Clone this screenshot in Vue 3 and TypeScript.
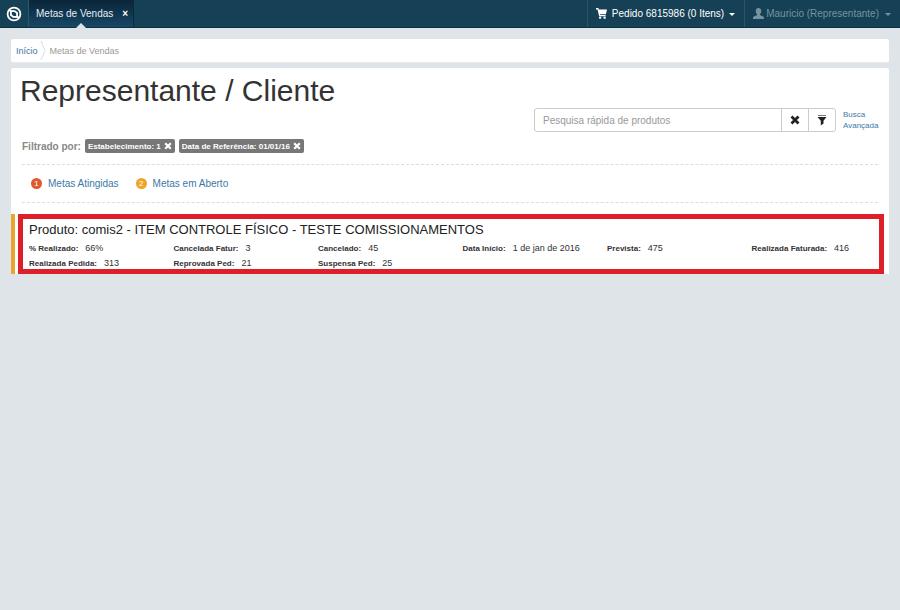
<script setup lang="ts">
import { ref } from 'vue'

interface Field {
  label: string
  value: string
}

const search = ref('')
const filters = ref<string[]>(['Estabelecimento: 1', 'Data de Referência: 01/01/16'])
const legend = [
  { count: 1, label: 'Metas Atingidas', tone: 'reached' },
  { count: 2, label: 'Metas em Aberto', tone: 'open' },
]
const fields: Field[] = [
  { label: '% Realizado:', value: '66%' },
  { label: 'Cancelada Fatur:', value: '3' },
  { label: 'Cancelado:', value: '45' },
  { label: 'Data Início:', value: '1 de jan de 2016' },
  { label: 'Prevista:', value: '475' },
  { label: 'Realizada Faturada:', value: '416' },
  { label: 'Realizada Pedida:', value: '313' },
  { label: 'Reprovada Ped:', value: '21' },
  { label: 'Suspensa Ped:', value: '25' },
]

function removeFilter(name: string): void {
  filters.value = filters.value.filter((f) => f !== name)
}
</script>

<template>
  <header class="navbar">
    <a class="brand" href="#" aria-label="Página inicial">
      <svg viewBox="0 0 16 16" width="16" height="16">
        <circle cx="8" cy="8" r="6.400" fill="none" stroke="#fff" stroke-width="1.800" />
        <path d="M2 4 9 4.200 12 6.500V10L14 12 7 11.800 4 9.500V6z" fill="#fff" />
        <path d="M5.800 6H8.500L10.200 7.500V10H7.500L5.800 8.500z" fill="#154055" />
      </svg>
    </a>
    <div class="tab">
      <a href="#">Metas de Vendas</a>
      <button type="button" aria-label="Fechar aba">×</button>
    </div>
    <nav class="menu">
      <a class="order" href="#">
        <svg viewBox="0 0 16 16" width="11" height="11">
          <path d="M0 0h3.500l.6 2H16l-1.600 7H5.800l.3 1.300H14V12H4.600L2.200 2H0z" fill="currentColor" />
          <circle cx="6" cy="14" r="1.700" fill="currentColor" />
          <circle cx="12.500" cy="14" r="1.700" fill="currentColor" />
        </svg>
        <span>Pedido 6815986 (0 Itens)</span>
        <i class="caret"></i>
      </a>
      <a class="user" href="#">
        <svg viewBox="0 0 16 16" width="11" height="11">
          <path d="M8 0c2.600 0 4 1.900 4 4.300 0 2-.9 3.800-2 4.700v1.200l4.800 2.300c.8.400 1.200 1 1.200 2V16H0v-1.500c0-1 .4-1.600 1.200-2L6 10.200V9C4.900 8.100 4 6.300 4 4.300 4 1.900 5.400 0 8 0z" fill="currentColor" />
        </svg>
        <span>Mauricio (Representante)</span>
        <i class="caret"></i>
      </a>
    </nav>
  </header>

  <main class="page">
    <nav class="breadcrumb" aria-label="Trilha">
      <a href="#">Início</a>
      <svg viewBox="0 0 6 23" width="6" height="23">
        <path d="M1 2 5 11.500 1 21" fill="none" stroke="#d8dde1" />
      </svg>
      <span>Metas de Vendas</span>
    </nav>

    <section class="panel">
      <h1>Representante / Cliente</h1>

      <form class="search" @submit.prevent>
        <div class="group">
          <input v-model="search" type="text" aria-label="Pesquisa rápida" placeholder="Pesquisa rápida de produtos" />
          <button type="button" aria-label="Limpar" @click="search = ''">
            <svg viewBox="0 0 10 10" width="10" height="10">
              <path d="M1.500 1.500 8.500 8.500M8.500 1.500 1.500 8.500" stroke="currentColor" stroke-width="2.800" />
            </svg>
          </button>
          <button type="submit" aria-label="Filtrar">
            <svg viewBox="0 0 10 11" width="10" height="11">
              <path d="M1 .5h8" stroke="#777" />
              <path d="M.5 2h9L6.500 5.800V8.500L3.800 10.500V5.800z" fill="currentColor" />
            </svg>
          </button>
        </div>
        <a href="#">Busca Avançada</a>
      </form>

      <div class="filters">
        <span class="filters-title">Filtrado por:</span>
        <span v-for="f in filters" :key="f" class="chip">
          {{ f }}
          <button type="button" :aria-label="'Remover ' + f" @click="removeFilter(f)">
            <svg viewBox="0 0 10 10" width="8" height="8">
              <path d="M1.500 1.500 8.500 8.500M8.500 1.500 1.500 8.500" stroke="currentColor" stroke-width="2.800" />
            </svg>
          </button>
        </span>
      </div>

      <div class="legend">
        <a v-for="l in legend" :key="l.label" href="#">
          <span class="dot" :class="l.tone">{{ l.count }}</span>
          <span>{{ l.label }}</span>
        </a>
      </div>

      <article class="goal">
        <div class="goal-box">
          <h2>Produto: comis2 - ITEM CONTROLE FÍSICO - TESTE COMISSIONAMENTOS</h2>
          <dl>
            <div v-for="f in fields" :key="f.label">
              <dt>{{ f.label }}</dt>
              <dd>{{ f.value }}</dd>
            </div>
          </dl>
        </div>
      </article>
    </section>
  </main>
</template>

<style>
body {
  margin: 0;
  background: #dfe4e8;
  font-family: "Liberation Sans", Arial, sans-serif;
  color: #333;
}
</style>

<style scoped>
* {
  box-sizing: border-box;
}
a {
  color: #3c78a8;
  text-decoration: none;
}
button {
  font-family: inherit;
  padding: 0;
  border: 0;
  background: none;
  color: inherit;
  cursor: pointer;
}
svg {
  display: block;
  flex: none;
}
.navbar {
  display: flex;
  height: 28px;
  background: #154055;
  border-bottom: 1px solid #0c2f42;
  font-size: 10px;
}
.brand {
  display: flex;
  align-items: center;
  justify-content: center;
  width: 28px;
}
.tab {
  position: relative;
  display: flex;
  align-items: center;
  gap: 9px;
  padding: 0 5px 0 7px;
  border-left: 1px solid #2a5870;
  border-right: 1px solid #0b2a3b;
  background: linear-gradient(#0a2438, #174866);
  color: #fff;
}
.tab a {
  color: #e6edf2;
}
.tab button {
  font-size: 10px;
  font-weight: bold;
}
.tab::after {
  content: "";
  position: absolute;
  bottom: -1px;
  left: 50%;
  margin-left: -5px;
  border: 5px solid transparent;
  border-top: 0;
  border-bottom-color: #dfe4e8;
}
.menu {
  display: flex;
  margin-left: auto;
}
.menu a {
  display: flex;
  align-items: center;
  gap: 5px;
  padding: 0 9px 0 8px;
  border-left: 1px solid #2b5468;
  color: #fff;
}
.menu .user {
  gap: 2px;
  color: #7594a2;
}
.caret {
  border: 3px solid transparent;
  border-top-color: currentColor;
  border-bottom: 0;
  margin-top: 2px;
}
.user .caret {
  margin-left: 4px;
}
.page {
  padding: 11px;
}
.breadcrumb {
  display: flex;
  align-items: center;
  height: 24px;
  padding: 0 5px;
  margin-bottom: 5px;
  background: #fff;
  border: 1px solid #e8ebee;
  border-width: 0 0 1px;
  border-radius: 2px;
  font-size: 9px;
  color: #999;
}
.breadcrumb svg {
  margin: 0 4px 0 2px;
}
.panel {
  background: #fff;
  border-radius: 2px 2px 0 0;
}
h1 {
  margin: 0;
  padding: 6px 9px 0;
  font-size: 30px;
  line-height: 34px;
  font-weight: normal;
}
.search {
  display: flex;
  justify-content: flex-end;
  align-items: center;
  gap: 7px;
  padding-right: 11px;
}
.group {
  display: flex;
  width: 302px;
  height: 24px;
  border: 1px solid #ccc;
  border-radius: 3px;
}
.group input {
  flex: 1;
  min-width: 0;
  padding: 0 8px;
  border: 0;
  background: none;
  font: 10px "Liberation Sans", Arial, sans-serif;
  color: #555;
}
.group input::placeholder {
  color: #999;
}
.group button {
  display: flex;
  align-items: center;
  justify-content: center;
  width: 27px;
  border-left: 1px solid #ccc;
  color: #222;
}
.search > a {
  width: 35px;
  font-size: 8px;
  line-height: 11px;
}
.filters {
  display: flex;
  align-items: center;
  gap: 4px;
  margin: 0 11px;
  padding: 7px 0 11px;
  border-bottom: 1px dashed #ddd;
}
.filters-title {
  font-size: 10px;
  font-weight: bold;
  color: #888;
}
.chip {
  display: flex;
  align-items: center;
  gap: 3px;
  height: 14px;
  padding: 0 3px;
  border-radius: 2px;
  background: #777;
  color: #fff;
  font-size: 8px;
  font-weight: bold;
}
.legend {
  display: flex;
  gap: 17px;
  margin: 0 11px;
  padding: 0 9px;
  height: 38px;
  border-bottom: 1px dashed #ddd;
  font-size: 10px;
}
.legend a {
  display: flex;
  align-items: center;
  gap: 6px;
}
.dot {
  display: flex;
  align-items: center;
  justify-content: center;
  width: 11px;
  height: 11px;
  border-radius: 50%;
  color: #fff;
  font-size: 8px;
}
.reached {
  background: #e2582c;
}
.open {
  background: #eda527;
}
.goal {
  margin-top: 11px;
  padding: 0 5px 0 3px;
  border-left: 4px solid #eaa32f;
}
.goal-box {
  padding: 4px 0 0 6px;
  border: 5px solid #dc1f28;
}
h2 {
  margin: 0 0 6px;
  font-size: 13px;
  line-height: 14px;
  font-weight: normal;
  color: #222;
}
dl {
  display: grid;
  grid-template-columns: repeat(5, 17fr) 15fr;
  row-gap: 4px;
  margin: 0;
  line-height: 11px;
}
dl div {
  display: flex;
  align-items: baseline;
  gap: 7px;
  white-space: nowrap;
}
dt {
  font-size: 8px;
  font-weight: bold;
}
dd {
  margin: 0;
  font-size: 9px;
}
</style>
